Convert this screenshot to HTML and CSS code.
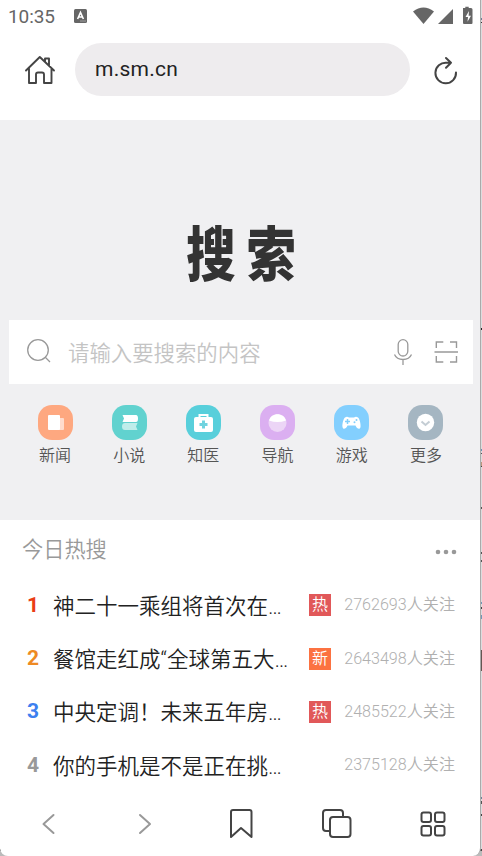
FILE: index.html
```html
<!DOCTYPE html>
<html lang="zh-CN">
<head>
<meta charset="utf-8">
<title>搜索</title>
<link rel="stylesheet" href="styles.css">
</head>
<body>
<div class="phone">
  <header class="status">
    <span class="time">10:35</span>
    <svg class="ime" width="13" height="14" viewBox="0 0 13 14"><rect width="13" height="14" rx="1.5" fill="#666"/><path d="M3.6 10 6.5 3.5 9.4 10M4.7 8h3.6" fill="none" stroke="#fff" stroke-width="1.6"/><path d="M6.5 12h5" stroke="#ddd" stroke-dasharray="1 1"/></svg>
    <svg class="signals" width="60" height="19" viewBox="0 0 60 19" fill="#666"><path d="M0 5.500Q10.500-2.500 21 5.500L10.500 18Z"/><path d="M40 3v15H25Z"/><path d="M50 2h2.300V.8h3.400V2H58q1.500 0 1.500 1.500V17q0 1-1 1H51q-1 0-1-1Z"/><path d="m56 5-3.500 6H55l-.5 4.800 3.500-6h-2.400Z" fill="#fff"/></svg>
  </header>
  <div class="address">
    <svg class="home" width="32" height="30" viewBox="0 0 32 30" fill="none" stroke="#444" stroke-width="1.900" stroke-linecap="round" stroke-linejoin="round"><path d="M2 15.500 15.800 2 30 15.500M5 13.500V28H12V19.500q0-2 2-2h4q2 0 2 2V28H27.500V13M21 6.500V3.500h4V11"/></svg>
    <div class="url">m.sm.cn</div>
    <svg class="reload" width="24" height="29" viewBox="0 0 24 29" fill="none" stroke="#444" stroke-width="2" stroke-linecap="round" stroke-linejoin="round"><path d="M22 16.500A10.300 10.300 0 1 1 12.500 6.700H17M12 2l5 4.700-5 5"/></svg>
  </div>
  <main class="hero">
    <h1 class="logo">搜索</h1>
    <div class="search">
      <svg class="glass" width="26" height="26" viewBox="0 0 26 26" fill="none" stroke="#999" stroke-width="1.300"><circle cx="12" cy="12" r="10.300"/><path d="m19 19 5 5"/></svg>
      <span class="placeholder">请输入要搜索的内容</span>
      <svg class="mic" width="20" height="28" viewBox="0 0 20 28" fill="none" stroke="#999" stroke-width="1.300"><rect x="5.200" y="1.700" width="9.600" height="16.300" rx="4.800"/><path d="M1.500 16.500c1.500 3.500 4.500 5 8.500 5s7-1.500 8.500-5M10 21.500V27"/></svg>
      <svg class="scan" width="25" height="24" viewBox="0 0 25 24" fill="none" stroke="#999" stroke-width="1.400"><path d="M2.300 8V2h7M16 2h6.500v6M2.300 16v6h7M16 22h6.500v-6M.5 12H24"/></svg>
    </div>
    <nav class="links">
      <div class="link"><i class="tile orange"><svg viewBox="0 0 35 35"><rect x="18" y="13" width="8" height="12" rx="1" fill="#ffdccd"/><rect x="10" y="10" width="12" height="15" rx="1" fill="#fff"/></svg></i>新闻</div>
      <div class="link"><i class="tile green"><svg viewBox="0 0 35 35"><path d="M10.500 10H24q2 0 2 3.500t-2 3.500H10.500l1.500-3.500Z" fill="#fff"/><path d="M25.500 18H13q-3 0-3 3.500t3 3.500h12.500L24 21.500Z" fill="#bfedea"/></svg></i>小说</div>
      <div class="link"><i class="tile cyan"><svg viewBox="0 0 35 35"><path d="M13.500 13v-3h8v3" fill="none" stroke="#fff" stroke-width="2"/><rect x="8" y="12" width="19" height="15" rx="2" fill="#fff"/><path d="M17.500 15.500v8M13.500 19.500h8" stroke="#70d3df" stroke-width="3"/></svg></i>知医</div>
      <div class="link"><i class="tile purple"><svg viewBox="0 0 35 35"><circle cx="17.500" cy="18" r="9" fill="#ecd5f6"/><path d="M9 15.500Q17.500 18.500 26 15.500C24 7 11 7 9 15.500Z" fill="#fff"/></svg></i>导航</div>
      <div class="link"><i class="tile blue"><svg viewBox="0 0 35 35"><path d="M11 12.500q2-1.500 4 0h5q2-1.500 4 0c1.500 1 3 6.500 2.500 9.500-.5 3-3.500 2-5-1.500h-8c-1.500 3.500-4.500 4.500-5 1.500-.500-3 1-8.500 2.500-9.500Z" fill="#fff"/><path d="M13.500 14v5M11 16.500h5" stroke="#83cffb" stroke-width="1.500"/><circle cx="22.500" cy="15" r="1" fill="#83cffb"/><circle cx="20.500" cy="17.200" r="1" fill="#83cffb"/></svg></i>游戏</div>
      <div class="link"><i class="tile gray"><svg viewBox="0 0 35 35"><circle cx="17.500" cy="17.500" r="8.700" fill="#fff"/><path d="m13.500 16.500 4 3.500 4-3.500" fill="none" stroke="#c4cdd4" stroke-width="2"/></svg></i>更多</div>
    </nav>
  </main>
  <section class="hot">
    <div class="hot-head"><h2>今日热搜</h2><svg width="22" height="6" viewBox="0 0 22 6" fill="#999"><circle cx="3" cy="3" r="2.300"/><circle cx="11" cy="3" r="2.300"/><circle cx="19" cy="3" r="2.300"/></svg></div>
    <div class="row"><b class="n1">1</b><span class="title">神二十一乘组将首次在…</span><em class="tag">热</em><span class="count">2762693人关注</span></div>
    <div class="row"><b class="n2">2</b><span class="title">餐馆走红成“全球第五大…</span><em class="tag new">新</em><span class="count">2643498人关注</span></div>
    <div class="row"><b class="n3">3</b><span class="title">中央定调！未来五年房…</span><em class="tag">热</em><span class="count">2485522人关注</span></div>
    <div class="row"><b class="n4">4</b><span class="title">你的手机是不是正在挑…</span><span class="count">2375128人关注</span></div>
  </section>
  <footer class="toolbar">
    <svg class="arrow" viewBox="0 0 32 32"><path d="m20.500 7-10 9 10 9"/></svg>
    <svg class="arrow" viewBox="0 0 32 32"><path d="m11 7 10 9-10 9"/></svg>
    <svg viewBox="0 0 32 32"><path d="M6 29V4q0-2 2-2h16.500q2 0 2 2v25L16 20Z"/></svg>
    <svg viewBox="0 0 32 32"><path d="M8 23H5q-3 0-3-3V5q0-3 3-3h14q3 0 3 3v3"/><rect x="9" y="9" width="20.500" height="20" rx="3"/></svg>
    <svg viewBox="0 0 32 32"><rect x="4.500" y="4.500" width="9.500" height="9.500" rx="2"/><rect x="18" y="4.500" width="9.500" height="9.500" rx="2"/><rect x="4.500" y="18" width="9.500" height="9.500" rx="2"/><rect x="18" y="18" width="9.500" height="9.500" rx="2"/></svg>
  </footer>
</div>
</body>
</html>
```
FILE: styles.css
```css
* { box-sizing: border-box; }
/* The gradient is the strip of desktop visible beside the phone window. */
body {
  margin: 0; width: 482px; height: 856px; overflow: hidden;
  font-family: Roboto, "Noto Sans CJK SC", sans-serif;
  background: linear-gradient(#dcdcde 0 18px, #6d7e96 18px 20px, #dcdcde 20px 22px, #333 22px 23px, #dcdcde 23px 328px, #222 328px 330px, #dcdcde 330px 449px, #6990b4 449px 451px, #dcdcde 451px 453px, #555 453px 454px, #dcdcde 454px 462px, #bb987e 462px 466px, #444 466px 467px, #dcdcde 467px 507px, #555 507px 509px, #dcdcde 509px 552px, #555 552px 554px, #dcdcde 554px 560px, #555 560px 562px, #dcdcde 562px 602px, #7197b6 602px 604px, #dcdcde 604px 607px, #444 607px 609px, #dcdcde 609px 615px, #7197b6 615px 619px, #dcdcde 619px 650px, #655652 650px 671px, #dcdcde 671px 797px, #6e8398 797px 799px, #dcdcde 799px 801px, #555 801px 804px, #dcdcde 804px 814px, #444 814px 816px, #dcdcde 816px 849px, #444 849px 851px, #bbb 851px);
}
svg { display: block; flex: none; }
.phone { width: 481px; height: 856px; display: flex; flex-direction: column; background: #fff; border-right: 1px solid #aaa; border-radius: 0 0 8px 8px; overflow: hidden; }
.status { height: 36px; display: flex; padding: 6px 7px 0 8px; color: #666; }
.time { font-size: 19px; line-height: 21px; width: 66px; letter-spacing: -.1px; }
.ime { margin-top: 3px; }
.signals { margin-left: auto; }
.address { height: 84px; display: flex; padding: 7px 22px 0 24px; }
.home { margin-top: 12px; }
.url { width: 335px; height: 53px; margin-left: 19px; padding-left: 20px; border-radius: 27px; background: #eeecee; font-size: 21px; line-height: 52px; color: #222; letter-spacing: .25px; }
.reload { margin: 13px 0 0 24px; }
.hero { height: 400px; background: #f0f0f2; }
.logo { margin: 0; padding-left: 15px; height: 200px; text-align: center; font: 900 56px/262px "Noto Sans CJK SC", sans-serif; letter-spacing: 12.700px; color: #333; transform: scale(.88, 1.060); transform-origin: 50% 134px; }
.search { height: 64px; margin: 0 7px 0 9px; padding: 0 14px 0 17px; display: flex; align-items: center; background: #fff; }
.glass { margin-top: -2px; }
.placeholder { flex: 1; margin: -2px 0 0 16px; font-size: 21.400px; font-weight: 350; color: #c4c4c4; }
.mic { margin: -1px 21px 0 0; }
.links { display: flex; justify-content: space-between; padding: 21px 29px 0 30px; }
.link { width: 50px; font-size: 16px; font-weight: 350; line-height: 24px; text-align: center; color: #555; }
.tile { display: block; width: 35px; height: 35px; margin: 0 auto 4px; border-radius: 14px; }
.orange { background: #fea880; }
.green { background: #61d2cf; }
.cyan { background: #58cfdb; }
.purple { background: #dbaff1; }
.blue { background: #83cffe; }
.gray { background: #a5b6c2; }
.hot { height: 272px; }
.hot-head { height: 58px; padding: 0 23px 0 22px; display: flex; justify-content: space-between; align-items: center; }
h2 { margin: -3px 0 0; font-size: 21.200px; font-weight: 350; color: #999; }
.hot-head svg { margin-top: 6px; }
.row { height: 53.400px; padding: 0 25px 0 27px; display: flex; align-items: center; white-space: nowrap; }
.row b { width: 26px; font-size: 21px; }
.n1 { color: #ea3d16; }
.n2 { color: #ee8a23; }
.n3 { color: #3d80ef; }
.n4 { color: #999; }
.title { width: 256px; margin-top: -1px; font-size: 21.500px; font-weight: 350; color: #222; }
.tag { width: 22px; height: 22px; margin-top: 1px; background: #e15859; color: #fff; font-size: 16px; font-weight: 350; font-style: normal; line-height: 21px; text-align: center; }
.new { background: #fc7241; }
.count { margin: -3px 0 0 auto; font-size: 16.100px; font-weight: 350; color: #b0b0b0; }
.toolbar { height: 64px; padding-left: 1px; display: flex; justify-content: space-around; }
.toolbar svg { width: 32px; height: 32px; margin: 16px -1px 0 1px; fill: none; stroke: #444; stroke-width: 2; stroke-linejoin: round; stroke-linecap: round; }
.toolbar .arrow { margin: 16px 0 0; stroke: #999; }
```
